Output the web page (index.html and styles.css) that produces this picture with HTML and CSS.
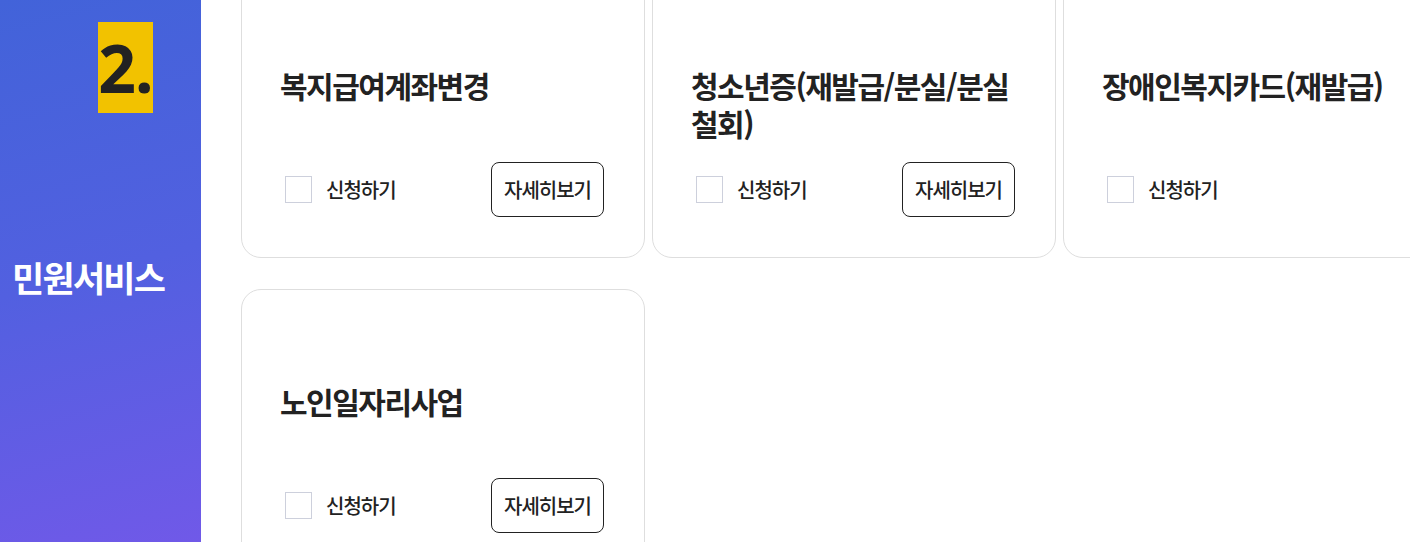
FILE: index.html
```html
<!DOCTYPE html>
<html lang="ko">

<head>
    <meta charset="UTF-8" />
    <title>민원서비스</title>

    <link rel="stylesheet" href="styles.css">
</head>

<body>
    <div id="sidebar">
        <div class="step-num">2.</div>
        <h2 class="step-title">민원서비스</h2>
    </div>

    <div id="content">
        <div class="card-grid">
            <div class="card">
                <h3 class="card-title">복지급여계좌변경</h3>
                <div class="card-foot">
                    <label class="apply"><span class="check"></span>신청하기</label>
                    <button class="detail-btn">자세히보기</button>
                </div>
            </div>

            <div class="card">
                <h3 class="card-title">청소년증(재발급/분실/분실철회)</h3>
                <div class="card-foot">
                    <label class="apply"><span class="check"></span>신청하기</label>
                    <button class="detail-btn">자세히보기</button>
                </div>
            </div>

            <div class="card">
                <h3 class="card-title">장애인복지카드(재발급)</h3>
                <div class="card-foot">
                    <label class="apply"><span class="check"></span>신청하기</label>
                </div>
            </div>

            <div class="card">
                <h3 class="card-title">노인일자리사업</h3>
                <div class="card-foot">
                    <label class="apply"><span class="check"></span>신청하기</label>
                    <button class="detail-btn">자세히보기</button>
                </div>
            </div>
        </div>
    </div>
</body>

</html>
```

FILE: styles.css
```css
body {
    margin: 0;
    padding: 0;
    background: #fff;
    color: #222;
    font-family: "Noto Sans CJK KR", "Noto Sans", sans-serif;
    display: flex;
    height: 100vh;
    overflow: hidden;
}

/* left blue column */
#sidebar {
    width: 201px;
    flex-shrink: 0;
    box-sizing: border-box;
    padding-top: 22px;
    background: linear-gradient(165deg, #4263d9 0%, #5260e0 50%, #7059e8 100%);
}

.step-num {
    width: 55px;
    height: 91px;
    margin-left: 98px;
    background: #f2c200;
    color: #222;
    font-family: "Noto Sans", sans-serif;
    font-size: 66px;
    font-weight: bold;
    line-height: 91px;
    letter-spacing: -1px;
    text-align: center;
}

.step-title {
    margin: 142px 0 0 12px;
    font-size: 35px;
    font-weight: bold;
    line-height: 44px;
    letter-spacing: -1.75px;
    color: #fff;
}

#content {
    flex: 1;
    padding-left: 40px;
    overflow: hidden;
}

.card-grid {
    display: grid;
    grid-template-columns: repeat(3, 404px);
    column-gap: 7px;
    row-gap: 31px;
    margin-top: -27px;
}

.card {
    height: 285px;
    box-sizing: border-box;
    padding: 92px 40px 40px 38px;
    border: 1px solid #dedede;
    border-radius: 20px;
    background: #fff;
    display: flex;
    flex-direction: column;
}

.card-title {
    margin: 0;
    font-size: 30px;
    font-weight: bold;
    line-height: 38px;
    letter-spacing: -1.5px;
    color: #222;
}

.card-foot {
    margin-top: auto;
    height: 55px;
    display: flex;
    align-items: center;
    justify-content: space-between;
}

.apply {
    display: flex;
    align-items: center;
    gap: 14px;
    padding-left: 5px;
    font-size: 20px;
    font-weight: 500;
    letter-spacing: -1px;
    cursor: pointer;
}

.check {
    width: 27px;
    height: 27px;
    box-sizing: border-box;
    border: 1px solid #cdd0dc;
    background: #fff;
}

.detail-btn {
    height: 55px;
    width: 113px;
    padding: 0;
    border: 1px solid #222;
    border-radius: 8px;
    background: #fff;
    color: #222;
    font-family: inherit;
    font-size: 20px;
    font-weight: 500;
    letter-spacing: -1px;
    cursor: pointer;
}
```
